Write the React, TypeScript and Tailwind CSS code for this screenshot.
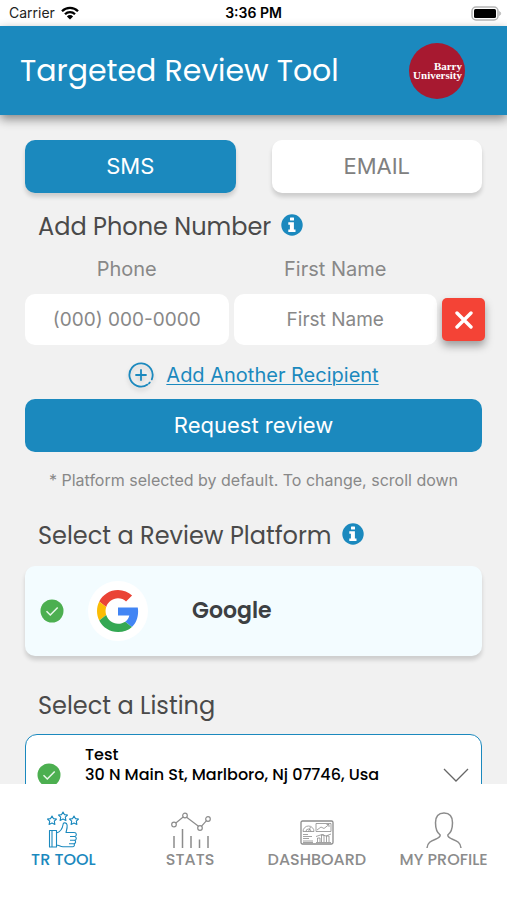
import type { ReactNode } from "react";

const body = "font-['Inter',sans-serif]";
const display = "font-['Poppins','Inter',sans-serif]";

function WifiIcon() {
  return (
    <svg width="18" height="14" viewBox="0 0 18 14" fill="none" stroke="#000" strokeWidth="2.3" aria-hidden="true">
      <path d="M1 5.2a11.3 11.3 0 0 1 16 0" />
      <path d="M4 8.3a7 7 0 0 1 10 0" />
      <path d="M9 13.6 5.9 10.4a4.4 4.4 0 0 1 6.2 0z" fill="#000" stroke="none" />
    </svg>
  );
}

function BatteryIcon() {
  return (
    <svg width="31" height="15" viewBox="0 0 31 15" aria-hidden="true">
      <rect x="1" y="1" width="26" height="13" rx="4" fill="#fff" stroke="#b5b5b5" strokeWidth="1.5" />
      <rect x="3" y="3" width="22" height="9" rx="1.5" fill="#000" />
      <path d="M28.5 5.5c1.6.6 1.6 3.4 0 4z" fill="#b5b5b5" stroke="#b5b5b5" strokeWidth=".6" />
    </svg>
  );
}

function InfoIcon() {
  return (
    <svg width="22" height="22" viewBox="0 0 22 22" aria-hidden="true">
      <circle cx="11" cy="11" r="10.7" fill="#1b89be" />
      <rect x="9" y="3.4" width="4" height="3.2" rx=".5" fill="#fff" />
      <path d="M7.300 8.200h5.600v7.200h1.600v2.600H7.300v-2.600h1.600v-4.600H7.300z" fill="#fff" />
    </svg>
  );
}

function CheckIcon() {
  return (
    <svg width="24" height="24" viewBox="0 0 24 24" className="shrink-0" aria-hidden="true">
      <circle cx="12" cy="12" r="11.5" fill="#4caf50" />
      <path d="m6.500 12.200 3.800 3.800 7.400-7.600" fill="none" stroke="#e9f7ea" strokeWidth="1.5" />
    </svg>
  );
}

function PlusIcon() {
  return (
    <svg width="26" height="26" viewBox="0 0 26 26" fill="none" stroke="#1b89be" strokeWidth="1.8" className="drop-shadow-[0_3px_2px_rgba(0,0,0,0.15)]" aria-hidden="true">
      <path d="M19.500 22.600A11.600 11.600 0 1 1 23.800 17.300" strokeLinecap="round" />
      <path d="M21.800 20.500l-.8.9M13 8v10M8 13h10" strokeLinecap="round" />
    </svg>
  );
}

function GoogleIcon() {
  return (
    <svg width="42" height="42" viewBox="0 0 48 48" aria-hidden="true">
      <path fill="#ea4335" d="M24 9.500c3.540 0 6.710 1.220 9.210 3.600l6.850-6.850C35.900 2.380 30.470 0 24 0 14.620 0 6.510 5.380 2.560 13.220l7.980 6.190C12.430 13.720 17.740 9.500 24 9.500z" />
      <path fill="#4285f4" d="M46.980 24.550c0-1.570-.15-3.090-.38-4.550H24v9.020h12.940c-.58 2.960-2.260 5.480-4.780 7.180l7.730 6c4.510-4.180 7.090-10.360 7.090-17.650z" />
      <path fill="#fbbc05" d="M10.530 28.590c-.48-1.450-.76-2.990-.76-4.590s.27-3.140.76-4.590l-7.980-6.190C.92 16.460 0 20.120 0 24c0 3.880.92 7.540 2.560 10.780l7.970-6.190z" />
      <path fill="#34a853" d="M24 48c6.480 0 11.930-2.130 15.890-5.810l-7.730-6c-2.150 1.450-4.920 2.300-8.160 2.300-6.260 0-11.570-4.220-13.470-9.910l-7.980 6.190C6.510 42.620 14.620 48 24 48z" />
    </svg>
  );
}

const star = "m0-4.500 1.400 2.600 3.100.4-2.200 2.200.6 3.300-2.900-1.400-2.900 1.400.6-3.300-2.200-2.200 3.100-.4z";

function ToolIcon() {
  return (
    <svg width="32" height="38" viewBox="0 0 32 38" fill="none" stroke="currentColor" strokeWidth="1.1" strokeLinejoin="round" aria-hidden="true">
      <path d={star} transform="translate(5 9.500)" />
      <path d={star} transform="translate(16 5.500)" />
      <path d={star} transform="translate(27 9.500)" />
      <path d="M2.500 19.500h7v16.500h-7zM5 20v15.500M9.500 22c3.500-1 6-4.500 6.700-9 .2-1.700 3.500-1.700 3.900 1 .4 2.700-.5 5-1.100 7.500h8c3 0 3 3.600.7 4 2.300.5 2 3.600-.2 3.800 1.700.6 1.500 3.300-.7 3.500 1.200.8.600 3-1.300 3H16c-3 0-4-1.800-6.500-1.800M23 25.500h4.500M23 29.300h4.300M22 32.800h4.500" />
    </svg>
  );
}

function StatsIcon() {
  return (
    <svg width="42" height="38" viewBox="0 0 42 38" fill="none" stroke="currentColor" strokeWidth="1.2" aria-hidden="true">
      <circle cx="5" cy="13.500" r="2.300" />
      <circle cx="16" cy="4.500" r="2.300" />
      <circle cx="31" cy="17" r="2.300" />
      <circle cx="39" cy="8" r="2.300" />
      <path d="M6.800 12 14.200 6M17.600 6.200 29.500 15.300M32.600 15.200l4.900-5.500" />
      <path d="M5 25v12M13.500 18v19M22 25v12M30.500 28.500V37M39 25v12" strokeWidth="1.5" />
    </svg>
  );
}

function DashboardIcon() {
  return (
    <svg width="34" height="25" viewBox="0 0 34 25" className="mt-1" fill="none" stroke="currentColor" strokeWidth=".8" aria-hidden="true">
      <rect x="1" y="1" width="32" height="23" rx="1.500" strokeWidth="1.3" />
      <path d="M3 11.500a5.500 5.500 0 0 1 11 0zM6 11.500a2.500 2.500 0 0 1 5 0M8.500 11.500 10.500 7" />
      <path d="M16 3.500h15v8H16zM17 10l4-3 3 1.500 5-4M26.500 4.500H29V7" />
      <path d="M3 14.500h5M3 16.500h9M3 18.500h6M3 21h10M3 22.500h10" />
      <path d="M16 22.500h15M17.500 22v-4h2.500v4M21.500 22v-7h2.500v7M26.500 22v-6H29v6M16 16.500l6-2 4 1.500 5-2" />
    </svg>
  );
}

function ProfileIcon() {
  return (
    <svg width="36" height="38" viewBox="0 0 36 38" fill="none" stroke="currentColor" strokeWidth="1.5" aria-hidden="true">
      <path d="M1 37c.3-5.500 4-7 8.500-8.800 3.300-1.300 4.700-2.200 4.700-4.200-3.300-2.300-4.700-6.800-4.700-12.200C9.500 5.500 12.500 2 18 2s8.500 3.500 8.500 9.800c0 5.400-1.400 9.900-4.700 12.200 0 2 1.400 2.900 4.700 4.200C31 30 34.700 31.500 35 37" />
    </svg>
  );
}

function SectionTitle({ children, info }: { children: ReactNode; info?: boolean }) {
  return (
    <div className="flex items-center gap-[10px] pl-[13px]">
      <h2 className={`${display} text-2xl leading-8 text-[#4a4a4a]`}>{children}</h2>
      {info && (
        <button type="button" aria-label="More information" className="mb-1">
          <InfoIcon />
        </button>
      )}
    </div>
  );
}

function NavItem({ icon, label, active }: { icon: ReactNode; label: string; active?: boolean }) {
  return (
    <a href="#" className={`flex flex-col items-center ${active ? "text-[#1b89be]" : "text-[#8c8c8c]"}`}>
      <span className="flex h-10 items-center">{icon}</span>
      <span className={`${display} text-base leading-5 font-medium whitespace-nowrap`}>{label}</span>
    </a>
  );
}

export default function App() {
  return (
    <div className={`${body} flex h-screen flex-col overflow-hidden bg-[#f1f1f1]`}>
      <div className="grid h-[26px] shrink-0 grid-cols-3 items-center bg-white px-[9px] text-sm text-black">
        <span className="flex items-center gap-[6px] text-[#222]">
          Carrier
          <WifiIcon />
        </span>
        <span className="text-center font-semibold">3:36 PM</span>
        <span className="-mr-1 flex justify-end">
          <BatteryIcon />
        </span>
      </div>

      <header className="z-10 flex h-[89px] shrink-0 items-center justify-between bg-[#1b89be] pr-[42px] pl-5 shadow-[0_4px_10px_rgba(0,0,0,0.45)]">
        <h1 className={`${display} text-[30px] leading-10 whitespace-nowrap text-white`}>Targeted Review Tool</h1>
        <div className="flex size-14 flex-col items-end justify-center rounded-full bg-[#a71930] pr-[3px] font-['Liberation_Serif',serif] text-[11px] leading-[9px] font-bold text-white">
          <span>Barry</span>
          <span>University</span>
        </div>
      </header>

      <main className="min-h-0 flex-1 overflow-y-auto px-[25px] pt-[25px] [scrollbar-width:none]">
        <div className="grid grid-cols-2 gap-9 text-[22px]">
          <button type="button" className="h-[53px] rounded-[10px] bg-[#1b89be] text-white shadow-[0_4px_4px_rgba(0,0,0,0.15)]">
            SMS
          </button>
          <button type="button" className="h-[53px] rounded-[10px] bg-white text-[#808080] shadow-[0_4px_4px_rgba(0,0,0,0.15)]">
            EMAIL
          </button>
        </div>

        <div className="mt-[18px]">
          <SectionTitle info>Add Phone Number</SectionTitle>
        </div>

        <div className="-mr-[3px] mt-[10px] grid grid-cols-[1fr_1fr_43px] gap-x-[5px] text-xl text-[#888]">
          <label htmlFor="phone" className="pb-[9px] text-center leading-8">
            Phone
          </label>
          <label htmlFor="first-name" className="pb-[9px] text-center leading-8">
            First Name
          </label>
          <span />
          <input id="phone" type="tel" placeholder="(000) 000-0000" className="h-[51px] w-full rounded-[10px] bg-white text-center text-[19px] placeholder:text-[#888]" />
          <input id="first-name" type="text" placeholder="First Name" className="h-[51px] w-full rounded-[10px] bg-white text-center text-[19px] placeholder:text-[#888]" />
          <button type="button" aria-label="Remove recipient" className="flex size-[43px] items-center justify-center self-center rounded-[5px] bg-[#f44336] shadow-[0_5px_8px_rgba(0,0,0,0.35)]">
            <svg width="18" height="18" viewBox="0 0 18 18" stroke="#fff" strokeWidth="3.4" strokeLinecap="round" aria-hidden="true">
              <path d="m2 2 14 14M16 2 2 16" />
            </svg>
          </button>
        </div>

        <button type="button" className="mx-auto mt-[14px] flex items-center gap-3 text-xl leading-8 text-[#1b89be]">
          <PlusIcon />
          <span className="underline decoration-1 underline-offset-2">Add Another Recipient</span>
        </button>

        <button type="button" className="mt-2 h-[53px] w-full rounded-[10px] bg-[#1b89be] text-[22px] text-white">
          Request review
        </button>

        <p className="mt-[18px] text-center text-base leading-5 whitespace-nowrap text-[#888]">
          * Platform selected by default. To change, scroll down
        </p>

        <div className="mt-[30px]">
          <SectionTitle info>Select a Review Platform</SectionTitle>
        </div>

        <label className="relative mt-[14px] flex h-[90px] items-center rounded-[10px] bg-[#f3fcff] pl-[15px] shadow-[0_4px_4px_rgba(0,0,0,0.15)]">
          <input type="radio" name="platform" defaultChecked className="sr-only" />
          <CheckIcon />
          <span className="ml-6 flex size-[60px] items-center justify-center rounded-full bg-white">
            <GoogleIcon />
          </span>
          <span className={`${display} ml-11 text-[22px] leading-8 font-semibold text-[#3c4043]`}>Google</span>
        </label>

        <div className="mt-[34px]">
          <SectionTitle>Select a Listing</SectionTitle>
        </div>

        <button type="button" aria-haspopup="listbox" className="mt-3 flex h-[82px] w-full items-center rounded-[12px] border border-[#1b89be] bg-white pr-3 pl-[11px] text-left">
          <CheckIcon />
          <span className={`${display} ml-6 flex flex-1 flex-col self-start pt-[10px] text-base leading-5 font-medium whitespace-nowrap text-black`}>
            <span>Test</span>
            <span>30 N Main St, Marlboro, Nj 07746, Usa</span>
          </span>
          <svg width="26" height="14" viewBox="0 0 26 14" fill="none" stroke="#666" strokeWidth="1.3" aria-hidden="true">
            <path d="m1 1 12 12L25 1" />
          </svg>
        </button>
      </main>

      <nav className="grid h-[116px] shrink-0 grid-cols-4 bg-white pt-[26px]">
        <NavItem icon={<ToolIcon />} label="TR TOOL" active />
        <NavItem icon={<StatsIcon />} label="STATS" />
        <NavItem icon={<DashboardIcon />} label="DASHBOARD" />
        <NavItem icon={<ProfileIcon />} label="MY PROFILE" />
      </nav>
    </div>
  );
}
